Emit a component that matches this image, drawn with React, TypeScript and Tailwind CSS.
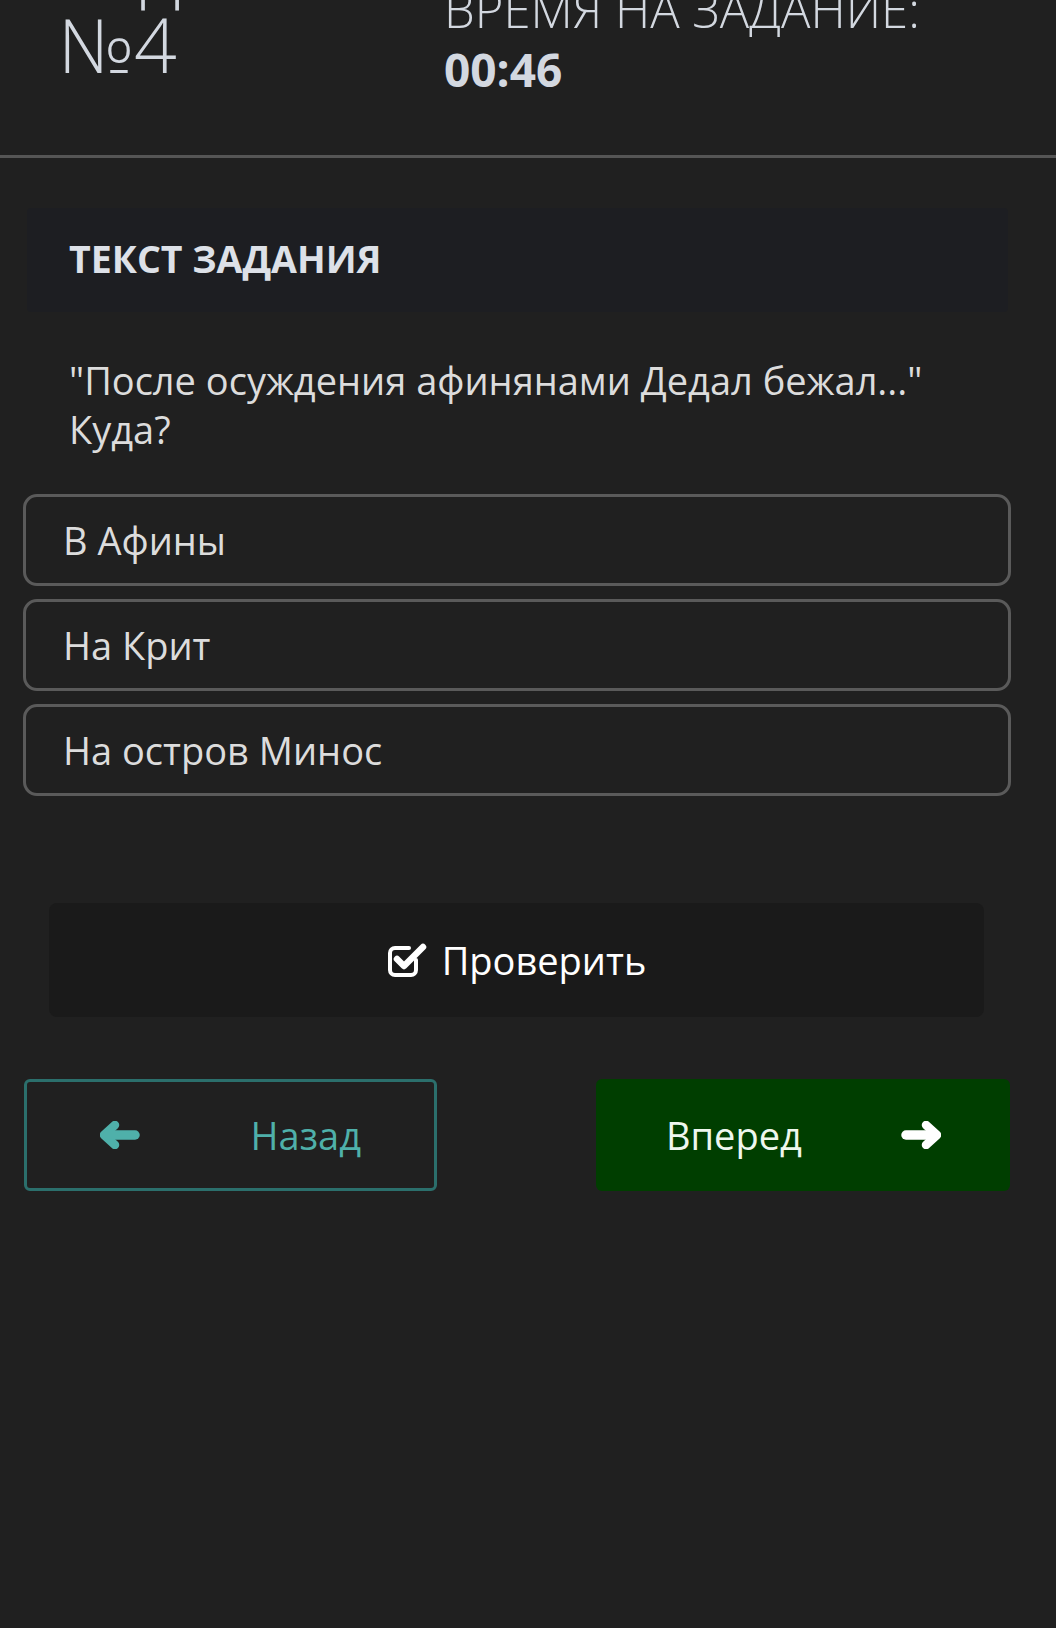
import React from 'react';

const answers = ['В Афины', 'На Крит', 'На остров Минос'];

const ArrowIcon = ({ dir, color }: { dir: 'left' | 'right'; color: string }) => (
  <svg
    width="40"
    height="28"
    viewBox="0 0 40 28"
    fill="none"
    stroke={color}
    strokeLinecap="round"
    strokeLinejoin="round"
    style={dir === 'right' ? { transform: 'scaleX(-1)' } : undefined}
  >
    <polyline points="15,4 4,14 15,24" strokeWidth="8.5" />
    <line x1="6" y1="14" x2="35" y2="14" strokeWidth="9.5" />
  </svg>
);

const CheckSquare = () => (
  <svg width="42" height="38" viewBox="0 0 42 38" fill="none" stroke="#ffffff" strokeLinecap="round" strokeLinejoin="round">
    <path d="M29 19 V29 a5 5 0 0 1 -5 5 H8 a5 5 0 0 1 -5 -5 V12 a5 5 0 0 1 5 -5 H22" strokeWidth="4" />
    <polyline points="10,18 17,25 36,6" strokeWidth="6.5" />
  </svg>
);

const App = () => {
  return (
    <div className="min-h-[1628px] bg-[#202020] overflow-hidden" style={{ fontFamily: '"Open Sans", "Noto Sans", sans-serif' }}>
      {/* header */}
      <div className="flex h-[158px] border-b-[3px] border-[#555555] overflow-hidden">
        <div className="w-[444px] pl-[58px] text-[75px] leading-[76px] font-light text-[#d3d8e0]">
          <div className="mt-[-70px]">Задание</div>
          <div>№4</div>
        </div>
        <div className="mt-[-21px] text-[#d3d8e0]">
          <div className="text-[49px] leading-[60px] font-light">ВРЕМЯ НА ЗАДАНИЕ:</div>
          <div className="text-[46px] leading-[60px] font-bold">00:46</div>
        </div>
      </div>

      {/* task text */}
      <div className="ml-[27px] mt-[50px] w-[981px] h-[104px] rounded bg-[#1d1e22] px-[42px] py-6">
        <h2 className="text-[37.5px] leading-[54px] font-bold text-[#dde1e8]">ТЕКСТ ЗАДАНИЯ</h2>
      </div>

      <p className="ml-[69px] mt-[44px] w-[900px] text-[38px] leading-[49px] text-[#dcdcdc]">
        "После осуждения афинянами Дедал бежал..." Куда?
      </p>

      {/* answers */}
      <div className="ml-[23px] mt-[40px] w-[988px] flex flex-col gap-[13px]">
        {answers.map((a) => (
          <div
            key={a}
            className="h-[92px] flex items-center rounded-[14px] border-[3px] border-[#5a5a5a] pl-[37px] text-[38px] text-[#dcdcdc]"
          >
            {a}
          </div>
        ))}
      </div>

      <button className="ml-[49px] mt-[107px] w-[935px] h-[114px] rounded-lg bg-[#1a1a1a] flex items-center justify-center gap-[13px] text-[38px] text-white">
        <CheckSquare />
        <span>Проверить</span>
      </button>

      {/* navigation */}
      <div className="mt-[62px] ml-[24px] w-[986px] flex justify-between">
        <button className="w-[413px] h-[112px] rounded-md border-[3px] border-[#2b6f6c] flex items-center justify-between pl-[73px] pr-[73px] text-[38px] text-[#4fb0aa]">
          <ArrowIcon dir="left" color="#4fb0aa" />
          <span>Назад</span>
        </button>
        <button className="w-[414px] h-[112px] rounded-md bg-[#003e00] flex items-center justify-between pl-[70px] pr-[69px] text-[38px] text-[#eef7ee]">
          <span>Вперед</span>
          <ArrowIcon dir="right" color="#ffffff" />
        </button>
      </div>
    </div>
  );
};

export default App;
